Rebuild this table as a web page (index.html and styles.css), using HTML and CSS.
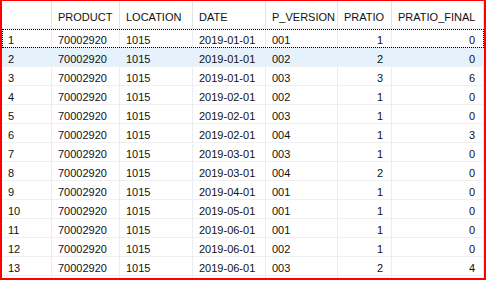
FILE: index.html
```html
<!DOCTYPE html>
<html lang="en">
<head>
  <meta charset="UTF-8">
  <meta name="viewport" content="width=device-width, initial-scale=1.0">
  <title>Results</title>
  <link rel="stylesheet" href="styles.css">
</head>
<body>
  <div class="results-frame">
    <div class="results-grid">
      <div class="grid-row grid-head">
        <div class="cell"></div>
        <div class="cell">PRODUCT</div>
        <div class="cell">LOCATION</div>
        <div class="cell">DATE</div>
        <div class="cell">P_VERSION</div>
        <div class="cell">PRATIO</div>
        <div class="cell">PRATIO_FINAL</div>
      </div>

      <div class="grid-row focused">
        <div class="cell">1</div><div class="cell">70002920</div><div class="cell">1015</div><div class="cell">2019-01-01</div><div class="cell">001</div><div class="cell num">1</div><div class="cell num">0</div>
      </div>
      <div class="grid-row selected">
        <div class="cell">2</div><div class="cell">70002920</div><div class="cell">1015</div><div class="cell">2019-01-01</div><div class="cell">002</div><div class="cell num">2</div><div class="cell num">0</div>
      </div>
      <div class="grid-row">
        <div class="cell">3</div><div class="cell">70002920</div><div class="cell">1015</div><div class="cell">2019-01-01</div><div class="cell">003</div><div class="cell num">3</div><div class="cell num">6</div>
      </div>
      <div class="grid-row">
        <div class="cell">4</div><div class="cell">70002920</div><div class="cell">1015</div><div class="cell">2019-02-01</div><div class="cell">002</div><div class="cell num">1</div><div class="cell num">0</div>
      </div>
      <div class="grid-row">
        <div class="cell">5</div><div class="cell">70002920</div><div class="cell">1015</div><div class="cell">2019-02-01</div><div class="cell">003</div><div class="cell num">1</div><div class="cell num">0</div>
      </div>
      <div class="grid-row">
        <div class="cell">6</div><div class="cell">70002920</div><div class="cell">1015</div><div class="cell">2019-02-01</div><div class="cell">004</div><div class="cell num">1</div><div class="cell num">3</div>
      </div>
      <div class="grid-row">
        <div class="cell">7</div><div class="cell">70002920</div><div class="cell">1015</div><div class="cell">2019-03-01</div><div class="cell">003</div><div class="cell num">1</div><div class="cell num">0</div>
      </div>
      <div class="grid-row">
        <div class="cell">8</div><div class="cell">70002920</div><div class="cell">1015</div><div class="cell">2019-03-01</div><div class="cell">004</div><div class="cell num">2</div><div class="cell num">0</div>
      </div>
      <div class="grid-row">
        <div class="cell">9</div><div class="cell">70002920</div><div class="cell">1015</div><div class="cell">2019-04-01</div><div class="cell">001</div><div class="cell num">1</div><div class="cell num">0</div>
      </div>
      <div class="grid-row">
        <div class="cell">10</div><div class="cell">70002920</div><div class="cell">1015</div><div class="cell">2019-05-01</div><div class="cell">001</div><div class="cell num">1</div><div class="cell num">0</div>
      </div>
      <div class="grid-row">
        <div class="cell">11</div><div class="cell">70002920</div><div class="cell">1015</div><div class="cell">2019-06-01</div><div class="cell">001</div><div class="cell num">1</div><div class="cell num">0</div>
      </div>
      <div class="grid-row">
        <div class="cell">12</div><div class="cell">70002920</div><div class="cell">1015</div><div class="cell">2019-06-01</div><div class="cell">002</div><div class="cell num">1</div><div class="cell num">0</div>
      </div>
      <div class="grid-row">
        <div class="cell">13</div><div class="cell">70002920</div><div class="cell">1015</div><div class="cell">2019-06-01</div><div class="cell">003</div><div class="cell num">2</div><div class="cell num">4</div>
      </div>
      <!-- next row, cut off by the frame -->
      <div class="grid-row">
        <div class="cell"></div><div class="cell"></div><div class="cell"></div><div class="cell"></div><div class="cell"></div><div class="cell"></div><div class="cell"></div>
      </div>
    </div>
  </div>
</body>
</html>
```

FILE: styles.css
```css
* {
  margin: 0;
  padding: 0;
  box-sizing: border-box;
}

body {
  font-family: "Liberation Sans", Arial, sans-serif;
  font-size: 11px;
  color: #111;
  background: #fff;
}

/* red highlight box around the grid */
.results-frame {
  width: 486px;
  height: 280px;
  border: 2px solid #ff0000;
  border-top-width: 1px;
  overflow: hidden;
}

.results-grid {
  display: flex;
  flex-direction: column;
}

.grid-row {
  display: grid;
  grid-template-columns: 50px 68px 73px 73px 72px 54px 92px;
  height: 19px;
  border-bottom: 1px solid #f0f0f0;
}

.cell {
  padding: 4px 0 0 6px;
  line-height: 14px;
  white-space: nowrap;
  overflow: hidden;
  border-right: 1px solid #eaeef4;
}

.cell.num {
  text-align: right;
  padding: 4px 8px 0 0;
}

.grid-head {
  height: 28px;
  border-bottom: 1px solid #f0f0f0;
}

.grid-head .cell {
  padding-top: 9px;
  border-right-color: #e3e3e3;
}

.grid-row.selected {
  background: #e5f1fb;
}

.grid-row.focused {
  outline: 1px dotted #000;
  outline-offset: -1px;
}
```
